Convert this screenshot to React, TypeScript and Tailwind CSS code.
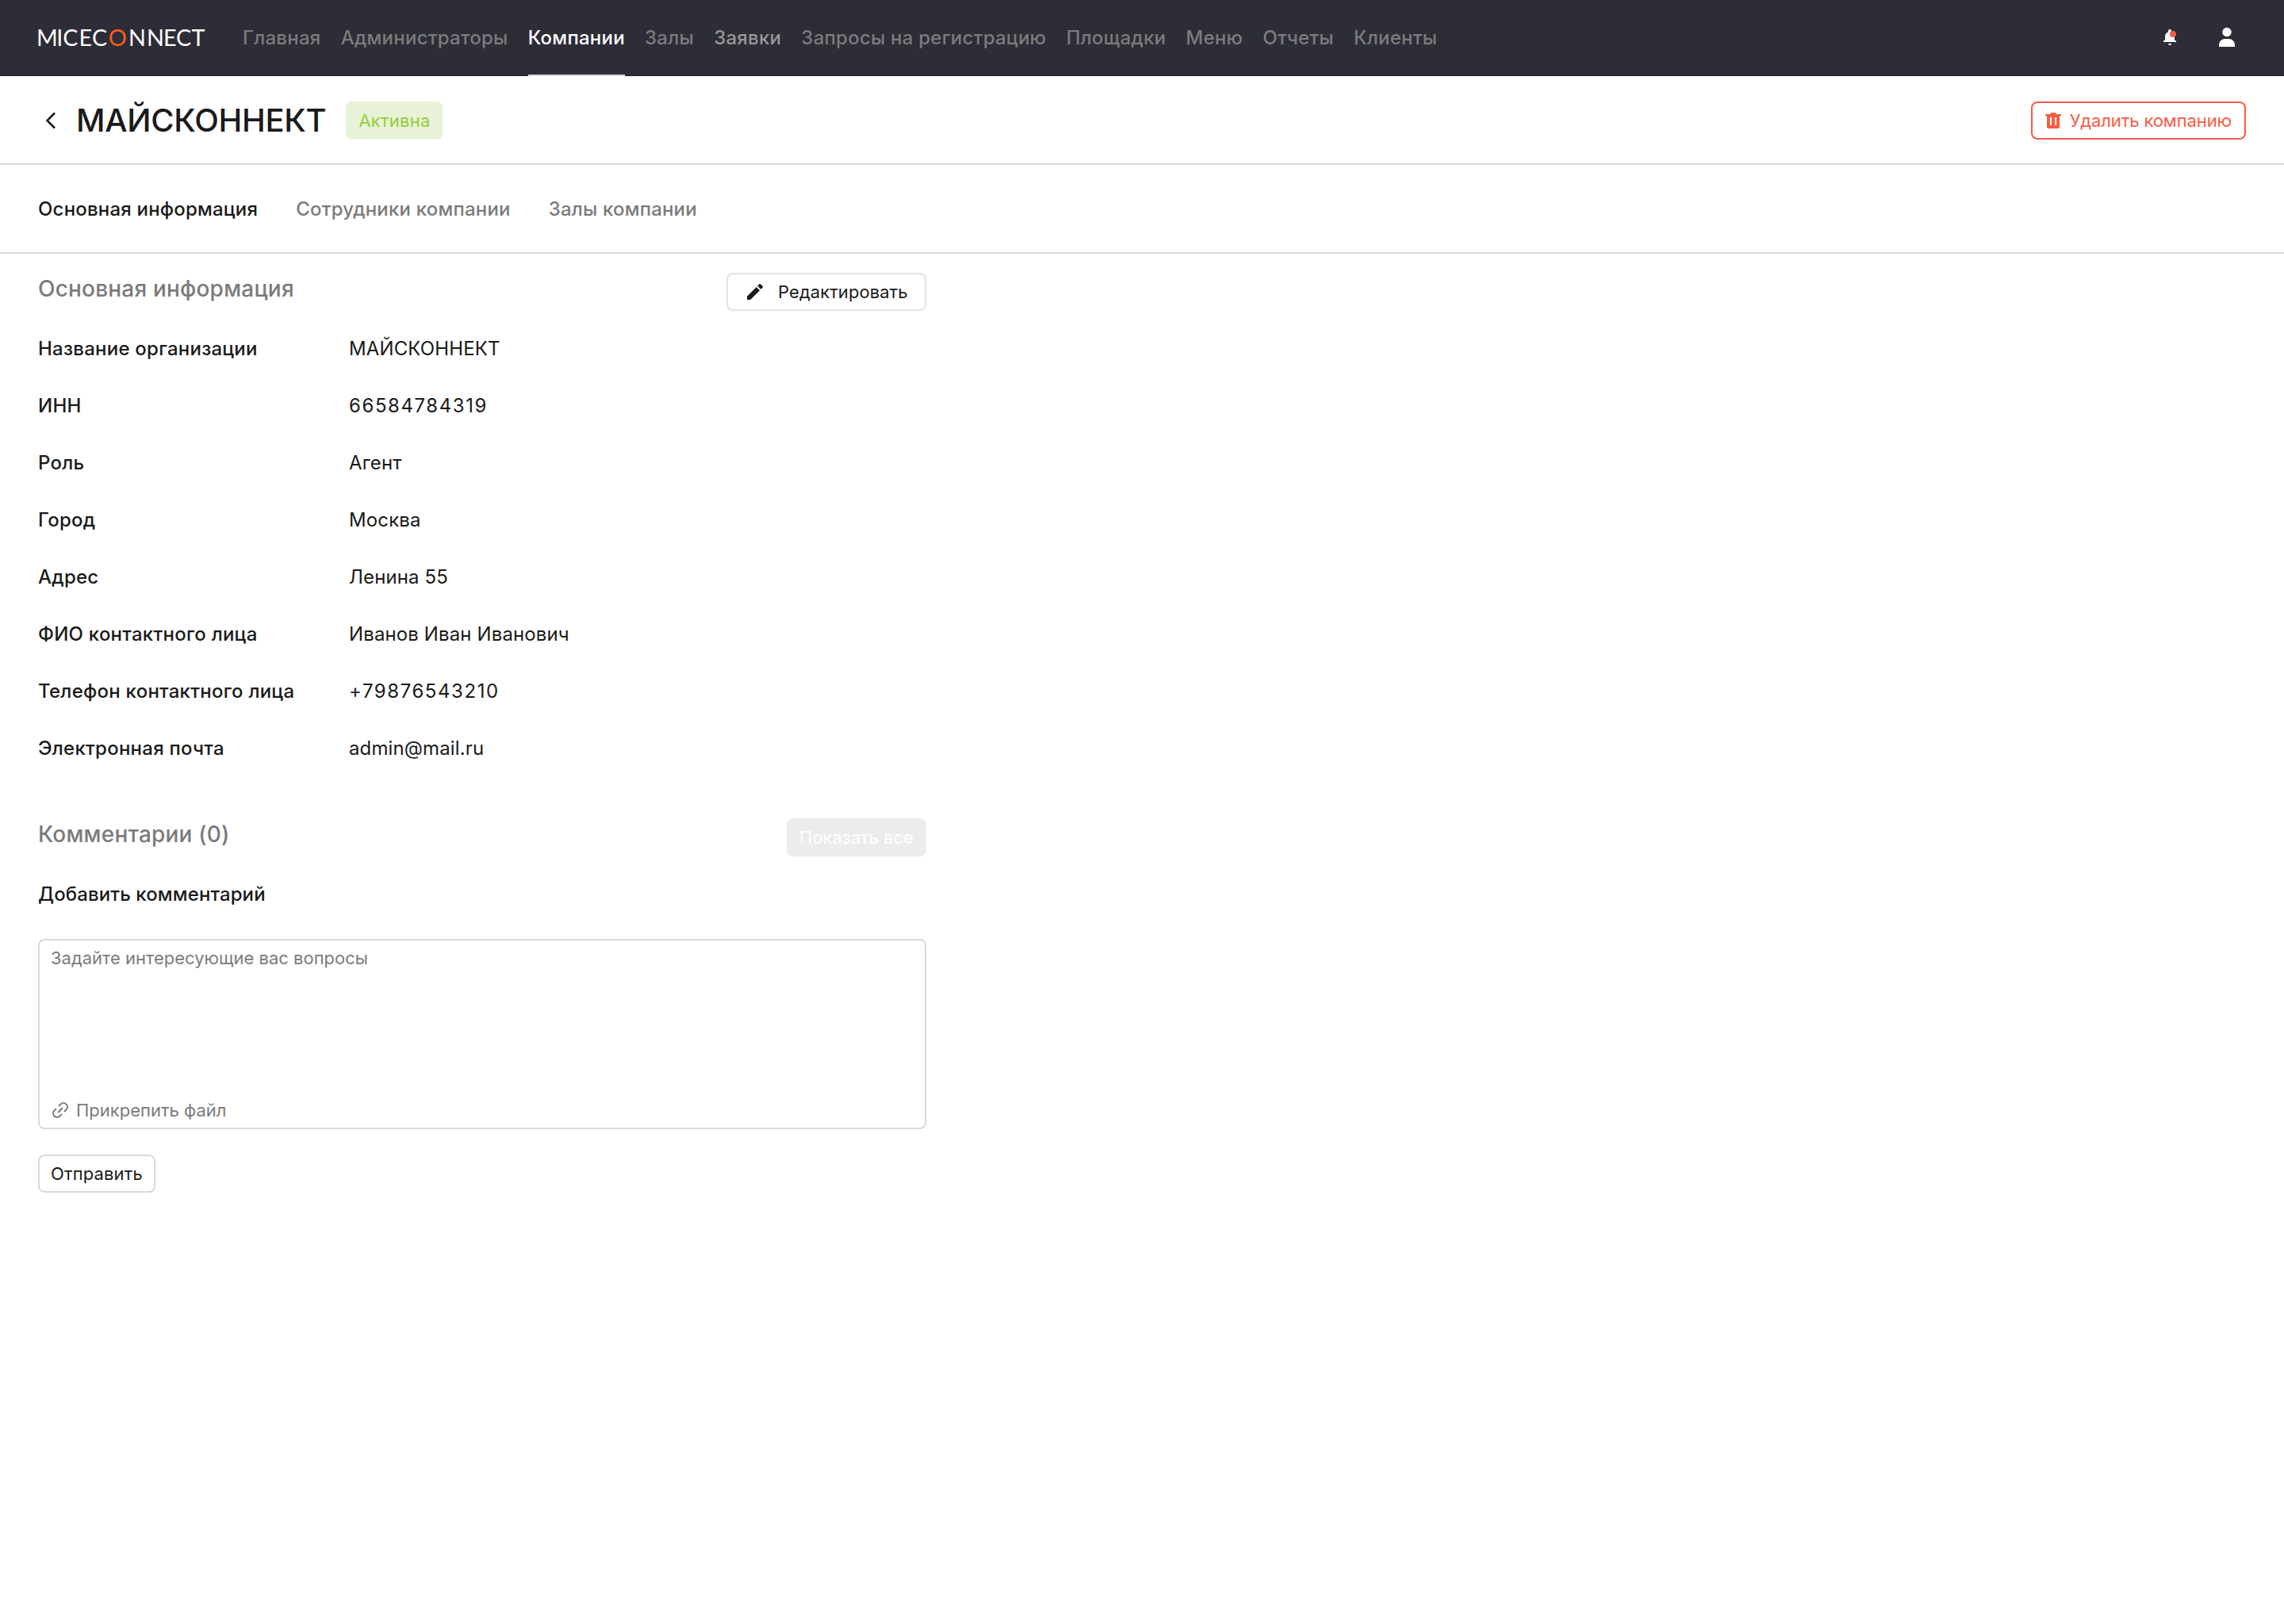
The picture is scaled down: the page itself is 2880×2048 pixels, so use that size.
import type { ReactNode } from 'react';

const navItems = [
  { label: 'Главная' },
  { label: 'Администраторы' },
  { label: 'Компании', state: 'active' },
  { label: 'Залы' },
  { label: 'Заявки', state: 'hover' },
  { label: 'Запросы на регистрацию' },
  { label: 'Площадки' },
  { label: 'Меню' },
  { label: 'Отчеты' },
  { label: 'Клиенты' },
];

const tabs = ['Основная информация', 'Сотрудники компании', 'Залы компании'];

const fields = [
  { label: 'Название организации', value: 'МАЙСКОННЕКТ' },
  { label: 'ИНН', value: '66584784319', numeric: true },
  { label: 'Роль', value: 'Агент' },
  { label: 'Город', value: 'Москва' },
  { label: 'Адрес', value: 'Ленина 55' },
  { label: 'ФИО контактного лица', value: 'Иванов Иван Иванович' },
  { label: 'Телефон контактного лица', value: '+79876543210', numeric: true },
  { label: 'Электронная почта', value: 'admin@mail.ru' },
];

function navColor(state?: string) {
  if (state === 'active') return 'text-white';
  if (state === 'hover') return 'text-[#979797]';
  return 'text-[#7b7b7b]';
}

function Logo() {
  return (
    <svg width="220" height="40" viewBox="-4 0 220 40" className="-mx-1 shrink-0 overflow-visible" fontFamily="Lato, sans-serif" fontSize="28.8" fill="#fff">
      <text y="31.3" x="-1.9 23.2 31.3 51.6 68">MICEC</text>
      <text y="31.3" x="88.8" fill="#ff5a1f">O</text>
      <text y="31.3" x="113.9 137 158.1 173.9 193.4">NNECT</text>
    </svg>
  );
}

function BellIcon() {
  return (
    <svg width="20" height="24" viewBox="0 0 20 24" fill="#fff" className="mt-0.5">
      <path d="M8 4.500V3a2 2 0 0 1 4 0v1.500A6 6 0 0 1 16 10v5h2v2H2v-2h2v-5a6 6 0 0 1 4-5.500zM8 19h4a2 2 0 0 1-4 0z" />
      <circle cx="14" cy="7" r="4" fill="#f65c45" />
    </svg>
  );
}

function UserIcon() {
  return (
    <svg width="20" height="26" viewBox="0 0 20 26" fill="#fff">
      <circle cx="10" cy="6.500" r="5.700" />
      <path d="M0 25v-2c0-5 3.500-8 8-8h4c4.500 0 8 3 8 8v2z" />
    </svg>
  );
}

function TrashIcon() {
  return (
    <svg width="20" height="20" viewBox="0 0 20 20" fill="#f65c45">
      <path fillRule="evenodd" d="M0 2h6l1.500-2h5L14 2h6v2h-2v14a2 2 0 0 1-2 2H4a2 2 0 0 1-2-2V4H0zM6 6v10h2V6zM12 6v10h2V6z" />
    </svg>
  );
}

function PencilIcon() {
  return (
    <svg width="20" height="20" viewBox="0 0 20 20" fill="#1a1a1a">
      <path d="M0 20v-4.200L11.800 4 16 8.200 4.200 20zM13.200 2.600 15.500.300a1 1 0 0 1 1.400 0l2.800 2.800a1 1 0 0 1 0 1.400l-2.300 2.300z" />
    </svg>
  );
}

function LinkIcon() {
  return (
    <svg width="20" height="20" viewBox="0 0 20 20" fill="none" stroke="#7b7b7b" strokeWidth="2">
      <path d="M7 13l6-6M8 5l2.500-2.500a4.600 4.600 0 0 1 7 7L15 12M5 8 2.500 10.500a4.600 4.600 0 0 0 7 7L12 15" />
    </svg>
  );
}

function Button({ className, children }: { className: string; children: ReactNode }) {
  return (
    <button className={`flex h-12 items-center rounded-lg text-[22px] leading-8 whitespace-nowrap ${className}`}>
      {children}
    </button>
  );
}

function Header() {
  return (
    <header className="flex h-24 items-center border-b-2 border-[#282631] bg-[#2d2d37] pr-[62px] pl-12">
      <Logo />
      <nav className="-mb-0.5 ml-[46px] flex h-24 gap-[25.2px]">
        {navItems.map(({ label, state }) => (
          <a
            key={label}
            className={`flex items-center border-b-2 pt-0.5 text-[24px] font-medium tracking-[0.01em] whitespace-nowrap ${navColor(state)} ${
              state === 'active' ? 'border-[#dadada]' : 'border-transparent'
            }`}
          >
            {label}
          </a>
        ))}
      </nav>
      <div className="ml-auto flex items-center gap-[52px]">
        <BellIcon />
        <UserIcon />
      </div>
    </header>
  );
}

function TitleBar() {
  return (
    <div className="flex h-28 items-center border-b-2 border-[#dadada] px-12 pt-0.5">
      <svg width="32" height="32" viewBox="0 0 32 32" fill="none" stroke="#1a1a1a" strokeWidth="2.500">
        <path d="M21 6.500 11.500 16l9.500 9.500" />
      </svg>
      <h1 className="ml-4 text-[40px] leading-[56px] font-medium tracking-[-0.007em]">МАЙСКОННЕКТ</h1>
      <span className="ml-[25px] flex h-12 items-center rounded-lg bg-[#e7f2d6] px-4 text-[22px] tracking-[0.01em] text-[#9acb3c]">
        Активна
      </span>
      <Button className="ml-auto gap-[11px] border-2 border-[#f65c45] px-4 tracking-[-0.005em] text-[#f65c45]">
        <TrashIcon />
        Удалить компанию
      </Button>
    </div>
  );
}

function CompanyInfo() {
  return (
    <section>
      <div className="flex justify-between">
        <h2 className="text-[28px] leading-10 font-medium tracking-[0.007em] text-[#7b7b7b]">Основная информация</h2>
        <Button className="w-[252px] gap-[19px] border-2 border-[#e2e2e2] pl-6 tracking-[0.003em]">
          <PencilIcon />
          Редактировать
        </Button>
      </div>
      <dl className="mt-3">
        {fields.map(({ label, value, numeric }) => (
          <div key={label} className="flex h-[72px] items-center text-[24px]">
            <dt className="w-[392px] font-medium tracking-[0.01em]">{label}</dt>
            <dd className={numeric ? 'tracking-[0.065em]' : 'tracking-[0.005em]'}>{value}</dd>
          </div>
        ))}
      </dl>
    </section>
  );
}

function Comments() {
  return (
    <section className="mt-[52px]">
      <div className="flex justify-between">
        <h2 className="text-[28px] leading-10 font-medium tracking-[0.007em] text-[#7b7b7b]">Комментарии (0)</h2>
        <Button className="bg-[#ececec] px-4 text-white">Показать все</Button>
      </div>
      <h3 className="mt-8 text-[24px] leading-8 font-medium tracking-[0.004em]">Добавить комментарий</h3>
      <div className="mt-10 flex h-60 flex-col justify-between rounded-lg border-2 border-[#dadada] px-3.5 py-1.5 text-[22px] leading-8 text-[#7b7b7b]">
        <p>Задайте интересующие вас вопросы</p>
        <div className="flex items-center gap-2.5 pl-0.5">
          <LinkIcon />
          Прикрепить файл
        </div>
      </div>
      <Button className="mt-8 border-2 border-[#dadada] px-3.5 tracking-[0.006em]">Отправить</Button>
    </section>
  );
}

export default function App() {
  return (
    <div className="min-h-[2048px] bg-white font-[Inter,sans-serif] text-[#1a1a1a]">
      <Header />
      <TitleBar />
      <div className="flex h-28 items-center gap-12 border-b-2 border-[#dadada] px-12 pt-0.5 text-[24px] font-medium tracking-[0.008em]">
        {tabs.map((tab, i) => (
          <a key={tab} className={i === 0 ? '' : 'text-[#7b7b7b]'}>
            {tab}
          </a>
        ))}
      </div>
      <main className="w-[1216px] px-12 pt-6">
        <CompanyInfo />
        <Comments />
      </main>
    </div>
  );
}
